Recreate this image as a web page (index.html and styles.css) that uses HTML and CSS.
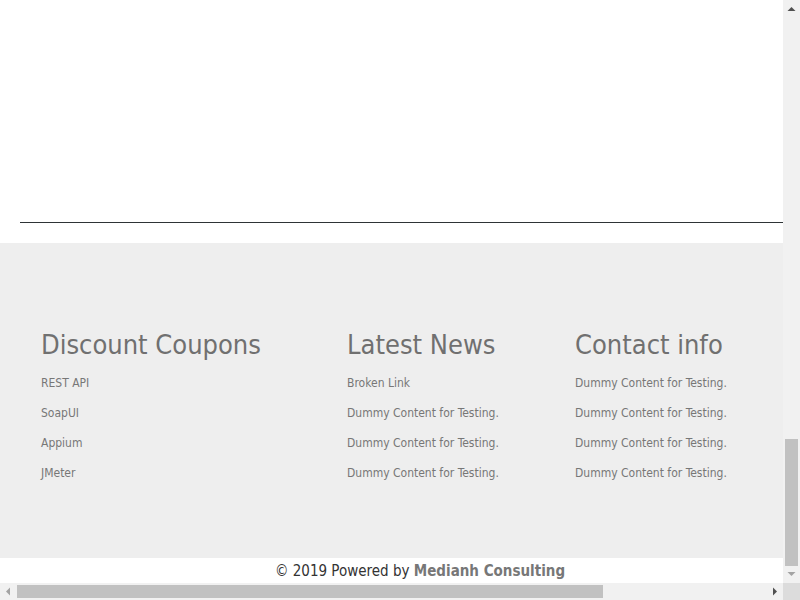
FILE: index.html
```html
<!DOCTYPE html>
<html>
<head>
<meta charset="utf-8">
<link rel="stylesheet" href="styles.css">
</head>
<body>
<div class="screen">
  <div class="viewport">
    <div class="page">
      <div class="top"><div class="rule"></div></div>
      <footer class="footer">
        <div class="cols">
          <div class="col col1">
            <h3 class="col-title">Discount Coupons</h3>
            <ul class="links">
              <li><a href="#">REST API</a></li>
              <li><a href="#">SoapUI</a></li>
              <li><a href="#">Appium</a></li>
              <li><a href="#">JMeter</a></li>
            </ul>
          </div>
          <div class="col col2">
            <h3 class="col-title">Latest News</h3>
            <ul class="links">
              <li><a href="#">Broken Link</a></li>
              <li><a href="#">Dummy Content for Testing.</a></li>
              <li><a href="#">Dummy Content for Testing.</a></li>
              <li><a href="#">Dummy Content for Testing.</a></li>
            </ul>
          </div>
          <div class="col col3">
            <h3 class="col-title">Contact info</h3>
            <ul class="links">
              <li><a href="#">Dummy Content for Testing.</a></li>
              <li><a href="#">Dummy Content for Testing.</a></li>
              <li><a href="#">Dummy Content for Testing.</a></li>
              <li><a href="#">Dummy Content for Testing.</a></li>
            </ul>
          </div>
        </div>
      </footer>
      <div class="copy">© 2019 Powered by <a class="brand" href="#">Medianh Consulting</a></div>
    </div>
  </div>
  <div class="vscroll">
    <div class="arrow-box"><svg width="17" height="17" viewBox="0 0 17 17"><path d="M4.5 11 L8.5 7 L12.5 11 Z" fill="#505050"/></svg></div>
    <div class="vtrack"><div class="vthumb"></div></div>
    <div class="arrow-box"><svg width="17" height="17" viewBox="0 0 17 17"><path d="M4.5 6 L8.5 10 L12.5 6 Z" fill="#a3a3a3"/></svg></div>
  </div>
  <div class="hscroll">
    <div class="arrow-box"><svg width="17" height="17" viewBox="0 0 17 17"><path d="M10 4.5 L6 8.5 L10 12.5 Z" fill="#a3a3a3"/></svg></div>
    <div class="htrack"><div class="hthumb"></div></div>
    <div class="arrow-box"><svg width="17" height="17" viewBox="0 0 17 17"><path d="M7 4.5 L11 8.5 L7 12.5 Z" fill="#505050"/></svg></div>
  </div>
  <div class="corner"></div>
</div>
</body>
</html>
```

FILE: styles.css
```css
html, body {
  margin: 0;
  padding: 0;
}
body {
  font-family: "DejaVu Sans Condensed", "DejaVu Sans", sans-serif;
  background: #fff;
}
.screen {
  width: 800px;
  height: 600px;
  display: grid;
  grid-template-columns: 783px 17px;
  grid-template-rows: 583px 17px;
  overflow: hidden;
}
.viewport {
  overflow: hidden;
  background: #fff;
}
.page {
  width: 1000px;
}
.top {
  height: 243px;
  padding-left: 20px;
  box-sizing: border-box;
  padding-top: 222px;
}
.rule {
  height: 1px;
  background: #2e3436;
  width: 980px;
}
.footer {
  background: #eeeeee;
  height: 315px;
  box-sizing: border-box;
  padding: 85px 0 0 41px;
}
.cols {
  display: flex;
}
.col1 { width: 306px; }
.col2 { width: 228px; }
.col3 { width: 230px; }
.col-title {
  margin: 0 0 6px;
  font-weight: normal;
  font-size: 27px;
  line-height: 34px;
  color: #707070;
}
.links {
  list-style: none;
  margin: 0;
  padding: 0;
}
.links li {
  height: 30px;
  line-height: 30px;
  font-size: 12px;
}
.links a {
  color: #777;
  text-decoration: none;
}
.copy {
  height: 25px;
  line-height: 27px;
  font-size: 15px;
  color: #333;
  width: 840px;
  text-align: center;
  overflow: hidden;
}
.brand {
  color: #777;
  font-weight: bold;
  text-decoration: none;
}
.vscroll {
  background: #f1f1f1;
  display: flex;
  flex-direction: column;
}
.arrow-box {
  width: 17px;
  height: 17px;
  flex: none;
}
.arrow-box svg { display: block; }
.vtrack {
  flex: 1;
  display: flex;
  flex-direction: column;
  justify-content: flex-end;
  padding: 0 2px;
}
.vthumb {
  height: 127px;
  background: #c1c1c1;
}
.hscroll {
  background: #f1f1f1;
  display: flex;
}
.htrack {
  flex: 1;
  padding: 2px 0;
  display: flex;
}
.hthumb {
  width: 586px;
  background: #c1c1c1;
}
.corner {
  background: #dcdcdc;
}
```
